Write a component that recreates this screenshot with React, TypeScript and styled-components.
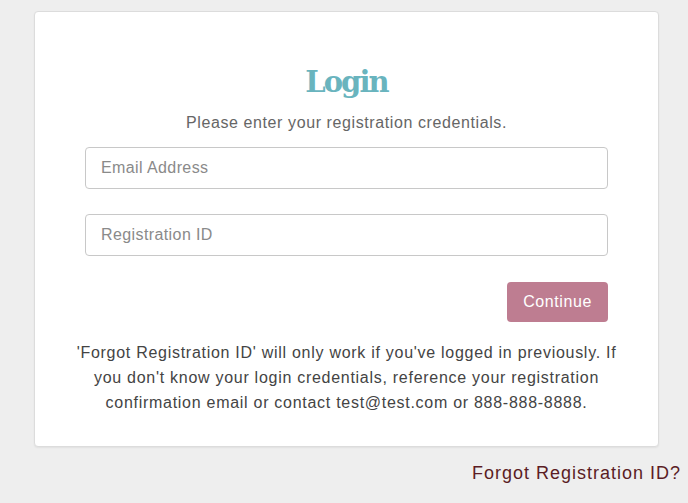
import React from "react";
import styled, { createGlobalStyle } from "styled-components";

const Global = createGlobalStyle`
  html, body { margin: 0; padding: 0; background: #eeeeee; }
  body { font-family: "Liberation Sans", Arial, Helvetica, sans-serif; letter-spacing: 0.6px; }
  * { box-sizing: border-box; }
`;

const Page = styled.div`
  padding: 11px 29px 0 34px;
  display: flex;
  flex-direction: column;
`;

const Card = styled.div`
  background: #ffffff;
  border: 1px solid #dcdcdc;
  border-radius: 4px;
  box-shadow: 0 1px 2px rgba(0, 0, 0, 0.06);
  padding: 52px 30px 31px;
  display: flex;
  flex-direction: column;
  align-items: center;
`;

const Title = styled.h1`
  margin: 0;
  font-family: "DejaVu Serif", "Liberation Serif", serif;
  font-weight: 700;
  font-size: 29px;
  line-height: 36px;
  color: #69b4be;
  letter-spacing: -1.9px;
`;

const Subtitle = styled.p`
  margin: 12px 0 13px;
  font-size: 16px;
  line-height: 22px;
  color: #666666;
`;

const Form = styled.form`
  align-self: stretch;
  margin: 0 20px;
  display: flex;
  flex-direction: column;
  gap: 25px;
`;

const Input = styled.input`
  height: 42px;
  width: 100%;
  border: 1px solid #c8c8c8;
  border-radius: 4px;
  padding: 0 15px;
  font-family: inherit;
  letter-spacing: 0.4px;
  font-size: 16px;
  color: #333;
  outline: none;
  &::placeholder { color: #8a8a8a; }
`;

const Actions = styled.div`
  display: flex;
  justify-content: flex-end;
  padding-top: 1px;
`;

const Button = styled.button`
  height: 40px;
  padding: 0 16px;
  border: none;
  border-radius: 4px;
  background: #be7d91;
  color: #ffffff;
  font-family: inherit;
  letter-spacing: 0.6px;
  font-size: 16px;
`;

const Note = styled.p`
  margin: 18px 0 0;
  text-align: center;
  font-size: 16px;
  line-height: 25px;
  letter-spacing: 0.72px;
  color: #444444;
`;

const Footer = styled.div`
  display: flex;
  justify-content: flex-end;
  padding: 14px 0 0;
  margin-right: -22px;
`;

const Link = styled.a`
  font-size: 18px;
  line-height: 24px;
  letter-spacing: 1px;
  color: #5b1c24;
  text-decoration: none;
`;

export default function App() {
  return (
    <>
      <Global />
      <Page>
        <Card>
          <Title>Login</Title>
          <Subtitle>Please enter your registration credentials.</Subtitle>
          <Form onSubmit={(e) => e.preventDefault()}>
            <Input type="email" placeholder="Email Address" />
            <Input type="text" placeholder="Registration ID" />
            <Actions>
              <Button type="submit">Continue</Button>
            </Actions>
          </Form>
          <Note>
            'Forgot Registration ID' will only work if you've logged in previously. If you don't know
            your login credentials, reference your registration confirmation email or contact
            test@test.com or 888-888-8888.
          </Note>
        </Card>
        <Footer>
          <Link href="#">Forgot Registration ID?</Link>
        </Footer>
      </Page>
    </>
  );
}
